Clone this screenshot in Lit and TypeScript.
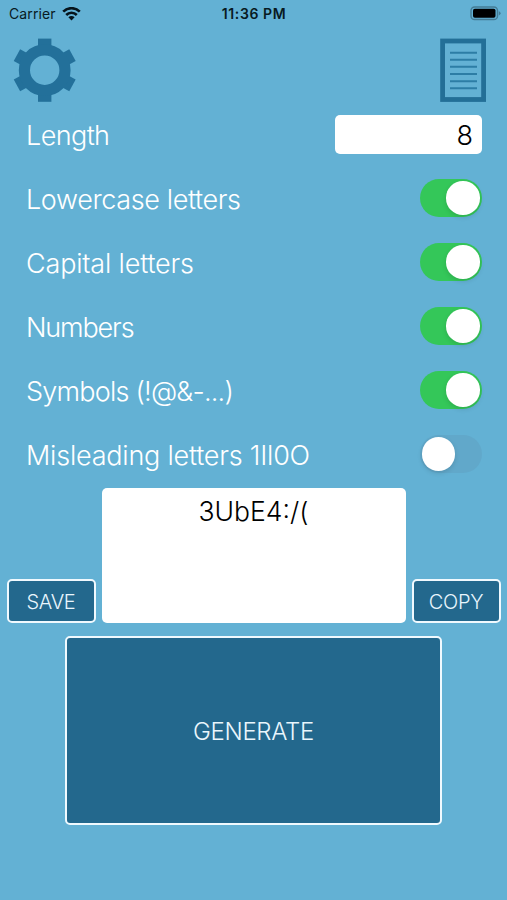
import { LitElement, html, svg, css } from "lit";
import { customElement, property, state } from "lit/decorators.js";
import { classMap } from "lit/directives/class-map.js";

@customElement("toggle-switch")
class ToggleSwitch extends LitElement {
  @property({ type: Boolean }) on = false;

  static styles = css`
    :host { display: block; }
    .track {
      box-sizing: border-box;
      display: flex;
      align-items: center;
      width: 62px;
      height: 38px;
      padding: 0 2px;
      border-radius: 19px;
      background: #61a8ca;
    }
    .track.on { background: #34c759; justify-content: flex-end; }
    .knob {
      width: 33.5px;
      height: 33.5px;
      border-radius: 50%;
      background: #fff;
      box-shadow: 0 2px 5px rgba(0, 0, 0, 0.13);
    }
  `;

  render() {
    return html`<div class=${classMap({ track: true, on: this.on })} role="switch" aria-checked=${this.on}>
      <div class="knob"></div>
    </div>`;
  }
}

interface Option {
  label: string;
  on: boolean;
  spacing: number;
}

@customElement("app-root")
class AppRoot extends LitElement {
  @state() options: Option[] = [
    { label: "Lowercase letters", on: true, spacing: -0.38 },
    { label: "Capital letters", on: true, spacing: -0.18 },
    { label: "Numbers", on: true, spacing: -1.15 },
    { label: "Symbols (!@&-...)", on: true, spacing: -0.78 },
    { label: "Misleading letters 1Il0O", on: false, spacing: -0.22 },
  ];

  static styles = css`
    :host {
      display: flex;
      flex-direction: column;
      box-sizing: border-box;
      width: 507px;
      height: 900px;
      overflow: hidden;
      background: #63b1d4;
      color: #fff;
      font-family: Inter, "Liberation Sans", sans-serif;
      font-weight: 350;
    }
    .status {
      display: grid;
      grid-template-columns: 1fr auto 1fr;
      align-items: center;
      height: 27px;
      padding: 0 6px 0 9px;
      color: #081a22;
      font-size: 14px;
      font-weight: 400;
    }
    .carrier { display: flex; align-items: center; gap: 6px; letter-spacing: 0.1px; }
    .time { font-weight: 600; letter-spacing: 0.6px; margin-right: 2px; }
    .battery { justify-self: end; display: block; }
    .tools {
      display: flex;
      justify-content: space-between;
      height: 76px;
      padding: 11px 20px 0 13px;
      box-sizing: border-box;
    }
    .row {
      display: flex;
      align-items: center;
      justify-content: space-between;
      height: 64px;
      padding: 0 25px 0 26px;
      box-sizing: border-box;
    }
    .form { margin-top: -0.5px; }
    .label { font-size: 27px; line-height: 34px; padding-top: 3px; white-space: pre; }
    .field {
      box-sizing: border-box;
      width: 147px;
      height: 39px;
      padding-right: 9px;
      border-radius: 5px;
      background: #fff;
      color: #000;
      font-size: 27px;
      line-height: 42px;
      text-align: right;
    }
    .switch { margin: -1px 0.5px 0 0; }
    .result { display: flex; align-items: flex-end; gap: 6px; padding: 0 6.5px; margin-top: 1px; }
    .output {
      flex: 1;
      height: 135px;
      box-sizing: border-box;
      padding-top: 5px;
      border-radius: 5px;
      background: #fff;
      color: #000;
      font-size: 26.5px;
      line-height: 36px;
      text-align: center;
    }
    .button {
      display: flex;
      align-items: center;
      justify-content: center;
      box-sizing: border-box;
      padding-top: 2px;
      border: 2.5px solid #f0f9fe;
      border-radius: 5px;
      background: #23688d;
      color: #e9f6fd;
    }
    .small { width: 89px; height: 44px; font-size: 20px; letter-spacing: -0.3px; }
    .generate { width: 377px; height: 189px; margin: 13px 0 0 65px; font-size: 24px; letter-spacing: -0.3px; }
    svg { display: block; }
  `;

  render() {
    return html`
      <div class="status">
        <div class="carrier">
          <span>Carrier</span>
          <svg width="19" height="14" viewBox="0 0 19 14">
            <g fill="none" stroke="#06141b" stroke-width="2.6">
              <path d="M1.2 4.6A11.8 11.8 0 0 1 17.8 4.6" />
              <path d="M4.2 8A7.5 7.5 0 0 1 14.8 8" />
            </g>
            <path fill="#06141b" d="M6.4 10.3A4.4 4.4 0 0 1 12.6 10.3L9.5 13.5Z" />
          </svg>
        </div>
        <span class="time">11:36 PM</span>
        <svg class="battery" width="31" height="15" viewBox="0 0 31 15">
          <rect x="1" y="1" width="26.5" height="12.5" rx="3.6" fill="none" stroke="#447c95" stroke-width="1.4" />
          <rect x="3" y="2.8" width="22.5" height="9" rx="1.8" fill="#000" />
          <path d="M28.8 5.2Q30.6 5.9 30.6 7.3T28.8 9.4Z" fill="#447c95" />
        </svg>
      </div>
      <div class="tools">
        <svg width="64" height="64" viewBox="-31.7 -32.2 64 64">
          <g fill="#23709a">${[0, 61.5, -61.5].map((a) => this.teeth(a))}</g>
          <circle r="20.3" fill="#63b1d4" stroke="#23709a" stroke-width="11.2" />
        </svg>
        <svg width="47" height="64" viewBox="0 0 47 64">
          <rect x="2.6" y="3" width="41" height="58.5" fill="none" stroke="#236f97" stroke-width="4.8" />
          <path d="M10 14.7H37M10 21.7H37M10 28.7H37M10 36H37M10 43.2H37M10 50.2H37" stroke="#2d7da5" stroke-width="2" />
        </svg>
      </div>
      <div class="form">
        <div class="row">
          <span class="label" style="letter-spacing:-0.6px">Length</span>
          <div class="field">8</div>
        </div>
        ${this.options.map(
          (o) => html`<div class="row">
            <span class="label" style="letter-spacing:${o.spacing}px">${o.label}</span>
            <toggle-switch class="switch" ?on=${o.on}></toggle-switch>
          </div>`
        )}
      </div>
      <div class="result">
        <div class="button small">SAVE</div>
        <div class="output">3UbE4:/(</div>
        <div class="button small">COPY</div>
      </div>
      <div class="button generate">GENERATE</div>
    `;
  }

  // One bar across the hub makes a pair of opposite teeth.
  private teeth(angle: number) {
    return svg`<rect x="-6.7" y="-31.6" width="13.4" height="63.2" transform="rotate(${angle})" />`;
  }
}
